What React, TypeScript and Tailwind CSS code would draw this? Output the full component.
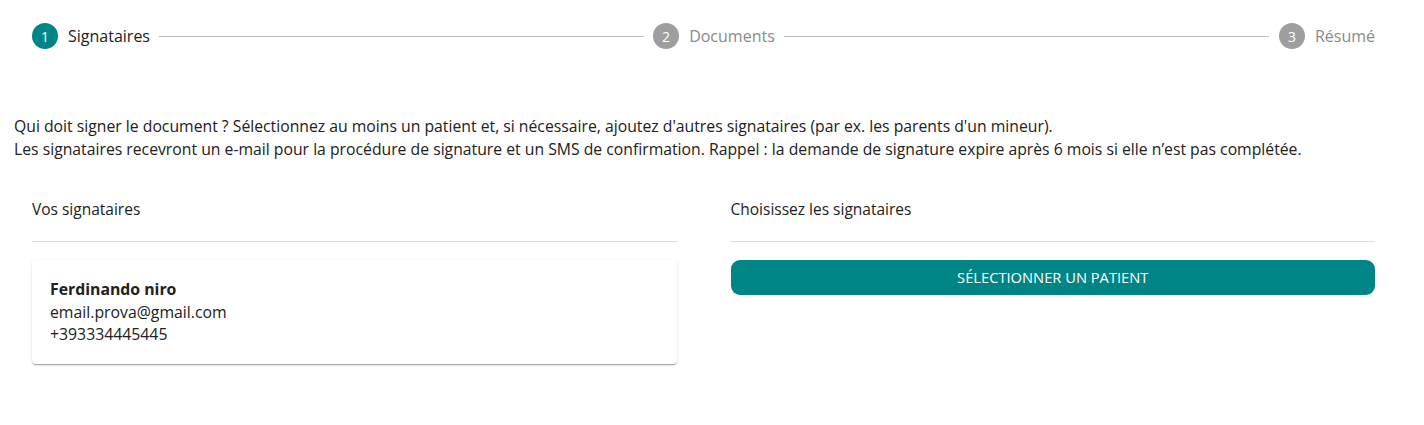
import React from "react";

const teal = "bg-[#008587]";

function Step({ n, label, active }: { n: number; label: string; active?: boolean }) {
  return (
    <div className="flex items-center shrink-0">
      <div
        className={`w-[26px] h-[26px] rounded-full flex items-center justify-center text-[14px] text-white ${
          active ? teal : "bg-[#9e9e9e]"
        }`}
      >
        {n}
      </div>
      <span className={`ml-[10px] text-[16px] ${active ? "text-[#212121]" : "text-[#8a8a8a]"}`}>{label}</span>
    </div>
  );
}

export default function App() {
  return (
    <div
      className="bg-white w-[1424px] h-[425px] text-[#212121]"
      style={{ fontFamily: '"Open Sans", "Noto Sans", sans-serif' }}
    >
      <div className="flex items-center pl-[32px] pr-[49px] pt-[23px] h-[49px]">
        <Step n={1} label="Signataires" active />
        <div className="flex-1 h-px bg-[#bdbdbd] ml-[9px] mr-[9px]" />
        <Step n={2} label="Documents" />
        <div className="flex-1 h-px bg-[#bdbdbd] ml-[9px] mr-[10px]" />
        <Step n={3} label="Résumé" />
      </div>

      <div className="pl-[14px] pt-[66px] text-[15.75px] leading-[23px]">
        <p>
          Qui doit signer le document ? Sélectionnez au moins un patient et, si nécessaire, ajoutez d'autres signataires
          (par ex. les parents d'un mineur).
        </p>
        <p>
          Les signataires recevront un e-mail pour la procédure de signature et un SMS de confirmation. Rappel : la
          demande de signature expire après 6 mois si elle n’est pas complétée.
        </p>
      </div>

      <div className="flex pl-[32px] pr-[49px] pt-[36px] gap-[54px]">
        <div className="flex-1">
          <div className="text-[15.5px] leading-[22px] pt-[1px] pb-[21px] border-b border-[#e0e0e0]">Vos signataires</div>
          <div className="mt-[18px] rounded-[4px] bg-white shadow-[0_2px_1px_-1px_rgba(0,0,0,0.2),0_1px_1px_0_rgba(0,0,0,0.14),0_1px_3px_0_rgba(0,0,0,0.12)] px-[18px] pt-[18px] pb-[18px] text-[15.8px] leading-[22.5px]">
            <div className="font-bold">Ferdinando niro</div>
            <div>email.prova@gmail.com</div>
            <div>+393334445445</div>
          </div>
        </div>
        <div className="flex-1">
          <div className="text-[15.5px] leading-[22px] pt-[1px] pb-[21px] border-b border-[#e0e0e0]">Choisissez les signataires</div>
          <button
            className={`mt-[18px] w-full h-[35px] rounded-[9px] ${teal} text-white text-[14.7px] flex items-center justify-center`}
          >
            SÉLECTIONNER UN PATIENT
          </button>
        </div>
      </div>
    </div>
  );
}
